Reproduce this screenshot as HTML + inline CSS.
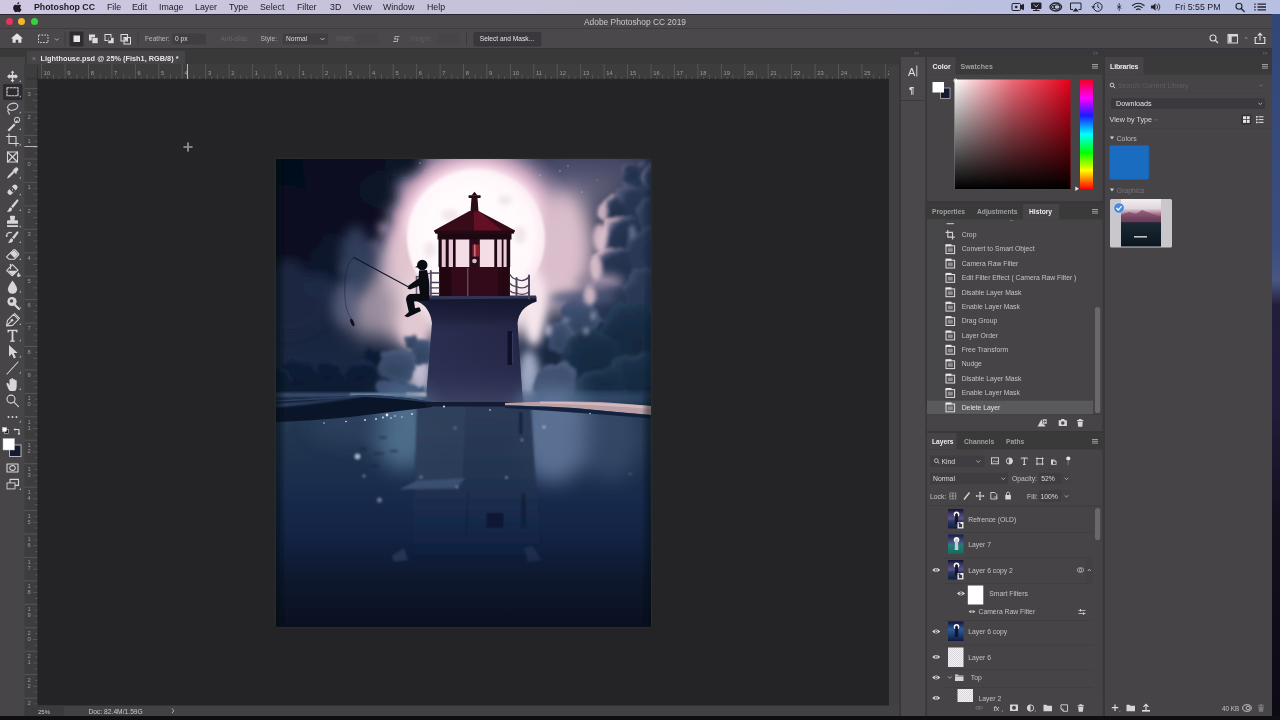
<!DOCTYPE html>
<html lang="en">
<head>
<meta charset="utf-8">
<title>Adobe Photoshop CC 2019</title>
<style>
*{box-sizing:border-box;margin:0;padding:0}
html,body{width:1280px;height:720px;overflow:hidden;background:#0f0f13}
body{font-family:"Liberation Sans",sans-serif;font-size:6.8px;color:#cfcdd1;position:relative}
.abs{position:absolute}
#win,#menubar{will-change:transform}
.t{position:absolute;white-space:pre;line-height:1}
svg{position:absolute;overflow:visible}
#menubar{left:0;top:0;width:1280px;height:14px;background:linear-gradient(90deg,#d0c8e2 0%,#c6c2da 30%,#c5c2d8 50%,#bcc0e0 76%,#b8c0e2 100%)}
#menubar .t{top:2.6px;font-size:8.8px;color:#1c1a24}
#desk{left:1272px;top:14px;width:8px;height:702px;background:linear-gradient(180deg,#33467a 0%,#3a4c80 33%,#4a5680 38%,#221d3c 41.5%,#241a3a 56%,#130f1e 72%,#0c0a14 100%)}
#win{left:0;top:14px;width:1272px;height:702px;background:#39383a}
#titlebar{left:0;top:0;width:1272px;height:15px;background:#4a484b;border-top:1px solid #2b2431}
#optbar{left:0;top:14px;width:1272px;height:21px;background:#4a484b;border-top:1.5px solid #3d3b3e;border-bottom:1px solid #343335}
</style>
</head>
<body>
<div id="menubar" class="abs">
  <svg style="left:12.5px;top:1.5px" width="9" height="11" viewBox="0 0 18 22"><path fill="#1c1a24" d="M12.6 0c.1 1.3-.4 2.5-1.1 3.4-.8.9-2 1.6-3.2 1.5-.1-1.2.500-2.5 1.2-3.3C10.3.7 11.6.1 12.6 0zm3.9 7.5c-1.3.800-2.1 2-2.1 3.6 0 1.8 1.1 3.2 2.6 3.8-.3 1-.8 1.9-1.4 2.8-.9 1.3-1.8 2.6-3.2 2.6-1.4 0-1.8-.8-3.4-.8-1.6 0-2.1.8-3.4.8-1.4.1-2.4-1.4-3.3-2.7C.5 15-.6 10.7 1.3 7.9c.9-1.4 2.5-2.3 4.1-2.3 1.4 0 2.6.9 3.4.9.8 0 2.3-1.1 4-.9 1.5.1 2.8.7 3.7 1.9z"/></svg>
  <span class="t" style="left:34px;font-weight:700">Photoshop CC</span>
  <span class="t" style="left:107px">File</span>
  <span class="t" style="left:132px">Edit</span>
  <span class="t" style="left:159px">Image</span>
  <span class="t" style="left:195px">Layer</span>
  <span class="t" style="left:229px">Type</span>
  <span class="t" style="left:260px">Select</span>
  <span class="t" style="left:297px">Filter</span>
  <span class="t" style="left:330px">3D</span>
  <span class="t" style="left:353px">View</span>
  <span class="t" style="left:383px">Window</span>
  <span class="t" style="left:427px">Help</span>
  <span class="t" style="left:1175px">Fri 5:55 PM</span>
  <svg style="left:1000px;top:0" width="280" height="14" viewBox="1000 0 280 14">
    <g fill="none" stroke="#23212b" stroke-width="1" stroke-linejoin="round">
      <rect x="1012" y="3.5" width="8.5" height="7" rx="1"/><path d="M1020.5 6l3-1.7v5.4l-3-1.7z" fill="#23212b"/><circle cx="1016.2" cy="7" r="1.3" fill="#23212b" stroke="none"/>
      <path d="M1031.5 3h9.5v5.5h-9.5z" fill="#23212b"/><path d="M1033 10.5h6.5M1036.2 8.5v2" stroke-width="1.2"/><path d="M1034 4.5l2.2 2.5 2.2-2.5" stroke="#d6d4ee" stroke-width=".8"/>
      <ellipse cx="1055.8" cy="7" rx="5.8" ry="4" stroke-width="1.3"/><ellipse cx="1057" cy="7" rx="3" ry="2.2" stroke-width="1.1"/><circle cx="1053" cy="7" r="1.6" stroke-width="1"/>
      <path d="M1073 9.5h-2.5v-6.5h10.5v6.5h-2.5"/><path d="M1075.7 8l3 3.5h-6z" fill="#23212b" stroke="none"/>
      <circle cx="1097.8" cy="7" r="4.3"/><path d="M1097.8 4.3V7l1.8 1.3" stroke-width=".9"/><path d="M1091.8 6l1.3 2.2 1.7-1.9" stroke-width=".9"/>
      <path d="M1119.2 3v8M1117 5.5l4.4 3M1121.4 5.5l-4.4 3" stroke-width=".8"/>
      <path d="M1132.5 5.5q5.8-4.5 11.6 0M1134.5 7.6q3.8-3 7.6 0M1136.5 9.6q1.8-1.5 3.6 0" stroke-width="1.2" stroke-linecap="round"/>
      <path d="M1151 5.5h2l2.5-2.2v7.4l-2.5-2.2h-2z" fill="#23212b" stroke="none"/><path d="M1157 5q1.5 2 0 4M1158.8 3.8q2.4 3.2 0 6.4" stroke-width=".9" stroke-linecap="round"/>
      <circle cx="1239" cy="6.3" r="3" stroke-width="1.1"/><path d="M1241.2 8.5l3 3" stroke-width="1.3" stroke-linecap="round"/>
      <path d="M1257.5 4.2h8.5M1257.5 7h8.5M1257.5 9.8h8.5" stroke-width="1.3"/><path d="M1254.2 4.2h1.5M1254.2 7h1.5M1254.2 9.8h1.5" stroke-width="1.3"/>
    </g>
  </svg>

</div>
<div id="desk" class="abs"></div>
<div id="win" class="abs">
  <div id="titlebar" class="abs">
    <span class="abs" style="left:5.5px;top:3px;width:7px;height:7px;border-radius:50%;background:#e6345a"></span>
    <span class="abs" style="left:18px;top:3px;width:7px;height:7px;border-radius:50%;background:#f2b52c"></span>
    <span class="abs" style="left:30.5px;top:3px;width:7px;height:7px;border-radius:50%;background:#36d23e"></span>
    <span class="t" style="left:584px;top:2.5px;font-size:8.4px;color:#c9c7cb">Adobe Photoshop CC 2019</span>
  </div>
  <div id="optbar" class="abs"></div>
  <svg style="left:0;top:15px" width="1272" height="20" viewBox="0 29 1272 20" font-family="Liberation Sans, sans-serif" font-size="6.6">
    <!-- home -->
    <path d="M17 33.2l6 5.3h-1.6v4.3h-3.1v-3h-2.6v3h-3.1v-4.3H11z" fill="#e4e2e6"/>
    <!-- tool preset -->
    <rect x="38.5" y="35" width="9.5" height="7.5" fill="none" stroke="#d2d0d4" stroke-width="1" stroke-dasharray="1.7 1.2"/>
    <path d="M55 38.5l1.8 1.8 1.8-1.8" stroke="#b5b3b7" stroke-width=".9" fill="none"/>
    <path d="M65 32V46M138 32V46M466.5 32V46" stroke="#3c3a3e" stroke-width="1"/>
    <!-- selection modes -->
    <rect x="69.5" y="31.5" width="14" height="15" rx="1" fill="#2e2c30"/>
    <rect x="73.5" y="35.5" width="6.5" height="6.5" fill="#e8e6ea"/>
    <rect x="89" y="34.5" width="6" height="6" fill="#dddbdf"/><rect x="92" y="37.5" width="6" height="6" fill="#dddbdf" stroke="#464447" stroke-width=".6"/>
    <rect x="105" y="34.5" width="6" height="6" fill="none" stroke="#dddbdf" stroke-width="1"/><rect x="108" y="37.5" width="6" height="6" fill="#dddbdf" stroke="#464447" stroke-width=".6"/><rect x="108.5" y="38" width="2.5" height="2.5" fill="#464447"/>
    <rect x="121" y="34.5" width="6.5" height="6.5" fill="none" stroke="#dddbdf" stroke-width="1"/><rect x="124" y="37.5" width="6.5" height="6.5" fill="none" stroke="#dddbdf" stroke-width="1"/><rect x="124.5" y="38" width="2.6" height="2.6" fill="#dddbdf"/>
    <!-- feather -->
    <text x="145" y="41.2" fill="#b9b7bb">Feather:</text>
    <rect x="172" y="33.5" width="34" height="11" rx="1" fill="#403e42"/>
    <text x="175" y="41.2" fill="#dcdade">0 px</text>
    <text x="220.5" y="41.2" fill="#67656a">Anti-alias</text>
    <text x="260.5" y="41.2" fill="#b9b7bb">Style:</text>
    <rect x="282.5" y="33.5" width="45.5" height="11" rx="1" fill="#403e42"/>
    <text x="286" y="41.2" fill="#dcdade">Normal</text>
    <path d="M320.5 38l2 2 2-2" stroke="#c5c3c7" stroke-width=".9" fill="none"/>
    <text x="336" y="41.2" fill="#5e5c61">Width:</text>
    <rect x="356" y="33.5" width="23" height="11" rx="1" fill="#474549"/>
    <path d="M393 41.5h4.5v-2M399.5 36.5H395v2" stroke="#b5b3b7" stroke-width=".9" fill="none"/><path d="M397.5 37.8l1.3 2 -2.6 0zM395 40.2l-1.3-2h2.6z" fill="#b5b3b7"/>
    <text x="411" y="41.2" fill="#5e5c61">Height:</text>
    <rect x="437" y="33.5" width="23" height="11" rx="1" fill="#474549"/>
    <rect x="474" y="32.5" width="67" height="13.5" rx="1.5" fill="#3a383c" stroke="#333135" stroke-width=".6"/>
    <text x="479.8" y="41.3" fill="#e6e4e8">Select and Mask...</text>
    <!-- right icons -->
    <circle cx="1213" cy="38" r="3" fill="none" stroke="#d8d6da" stroke-width="1.1"/><path d="M1215.2 40.2l2.8 2.8" stroke="#d8d6da" stroke-width="1.3"/>
    <rect x="1228" y="34.5" width="9.5" height="8.5" fill="none" stroke="#d8d6da" stroke-width="1"/><rect x="1228.5" y="35" width="3.2" height="7.5" fill="#d8d6da"/><rect x="1228.5" y="35" width="8.5" height="1.5" fill="#d8d6da"/>
    <path d="M1245 38h2.4" stroke="#a5a3a7" stroke-width=".9"/>
    <path d="M1257 37.5h-1.8v6h9.6v-6H1263" fill="none" stroke="#e2e0e4" stroke-width="1.1"/><path d="M1260 40.5V33.5M1257.8 35.6l2.2-2.2 2.2 2.2" fill="none" stroke="#e2e0e4" stroke-width="1.1"/>
  </svg>

  <div class="abs" style="left:0;top:36px;width:24.5px;height:666px;background:#39383a"></div>
  <div class="abs" style="left:0;top:43px;width:24.5px;height:659px;background:#474548"></div>
  <svg style="left:4px;top:38px" width="8" height="5" viewBox="0 0 8 5"><path d="M.5.5l2 2-2 2M4 .5l2 2-2 2" stroke="#77757a" stroke-width=".7" fill="none"/></svg>
  <svg style="left:0;top:0" width="27" height="702" viewBox="0 0 27 702"><rect x="3" y="70" width="19.5" height="16" rx="1.5" fill="#2d2b2f"/><g transform="translate(12.5 62.400000000000006)"><path d="M0-6l2 2.4h-1.3v2.3h2.3v-1.3L5.4 0 3 2.6V1.3H.7v2.3H2L0 6l-2-2.4h1.3V1.3h-2.3v1.3L-5.4 0-3-2.6v1.3h2.3v-2.3H-2z" fill="#d7d5d9"/><path d="M6.5 5.5h2v-2z" fill="#a9a7ab"/></g><g transform="translate(12.5 77.7)"><rect x="-5.5" y="-4" width="11" height="8" stroke="#d7d5d9" fill="none" stroke-width="1.1" stroke-linecap="round" stroke-linejoin="round" stroke-dasharray="2 1.3" stroke-linecap="butt"/><path d="M6.5 5.5h2v-2z" fill="#a9a7ab"/></g><g transform="translate(12.5 93.8)"><ellipse cx=".5" cy="-1" rx="5.2" ry="3.4" transform="rotate(-15)" stroke="#d7d5d9" fill="none" stroke-width="1.1" stroke-linecap="round" stroke-linejoin="round"/><path d="M-3.5 1.5q-2 1.5-.5 3t.5 2" stroke="#d7d5d9" fill="none" stroke-width="1.1" stroke-linecap="round" stroke-linejoin="round" stroke-width=".9"/><path d="M6.5 5.5h2v-2z" fill="#a9a7ab"/></g><g transform="translate(12.5 110.4)"><path d="M-5 5.5L1.5-1l1.5 1.5L-3.5 7z" fill="#d7d5d9"/><path d="M2-1.5l2.5-3 1 1-3 2.5z" fill="#d7d5d9"/><circle cx="4.5" cy="-4.5" r="2.6" stroke="#d7d5d9" fill="none" stroke-width="1.1" stroke-linecap="round" stroke-linejoin="round" stroke-width=".7" stroke-dasharray="1 1"/><path d="M6.5 5.5h2v-2z" fill="#a9a7ab"/></g><g transform="translate(12.5 126)"><path d="M-3.5-6v9.5H6M-6-3.5h9.5V6" stroke="#d7d5d9" fill="none" stroke-width="1.1" stroke-linecap="round" stroke-linejoin="round" stroke-width="1.3" stroke-linecap="butt"/><path d="M6.5 5.5h2v-2z" fill="#a9a7ab"/></g><g transform="translate(12.5 143)"><rect x="-5" y="-5" width="10" height="10" stroke="#d7d5d9" fill="none" stroke-width="1.1" stroke-linecap="round" stroke-linejoin="round"/><path d="M-5-5L5 5M5-5L-5 5" stroke="#d7d5d9" fill="none" stroke-width="1.1" stroke-linecap="round" stroke-linejoin="round" stroke-width=".8"/></g><g transform="translate(12.5 159)"><path d="M-5.5 5.5l1-2.5 5-5 1.5 1.5-5 5z" fill="#d7d5d9"/><path d="M1-3.5l1.5-1.5q1.5-1.3 2.8 0t0 2.8L3.8-.700l.7.7-1 1-3.5-3.5 1-1z" fill="#d7d5d9"/><path d="M6.5 5.5h2v-2z" fill="#a9a7ab"/></g><g transform="translate(12.5 175.7)"><rect x="-6" y="-2.6" width="12" height="5.2" rx="2.4" transform="rotate(-45)" fill="#d7d5d9"/><rect x="-1.8" y="-2.6" width="3.6" height="5.2" transform="rotate(-45)" fill="#474548"/><circle cx="0" cy="0" r=".6" fill="#d7d5d9"/><path d="M6.5 5.5h2v-2z" fill="#a9a7ab"/></g><g transform="translate(12.5 191.5)"><path d="M5.5-6q1 .5.2 1.8L.5 2.5l-2-1.6L4-5.5q.8-1 1.5-.5z" fill="#d7d5d9"/><path d="M-2 1.8l1.8 1.5q-.3 2.5-2.8 3-1.5.2-2.8-.6 1.8-.5 2-2 .3-1.6 1.8-1.9z" fill="#d7d5d9"/><path d="M6.5 5.5h2v-2z" fill="#a9a7ab"/></g><g transform="translate(12.5 207.7)"><path d="M-1.6-6h3.2q1.2 0 1 1.3L2-1.5h2.5q1 0 1 1V2h-11V-.5q0-1 1-1H-2l-.6-3.2q-.2-1.3 1-1.3z" fill="#d7d5d9"/><rect x="-5.5" y="3.5" width="11" height="1.8" fill="#d7d5d9"/><path d="M6.5 5.5h2v-2z" fill="#a9a7ab"/></g><g transform="translate(12.5 223.5)"><path d="M5.5-6q1 .5.2 1.8L1.5 1.5l-2-1.6L4-5.5q.8-1 1.5-.5z" fill="#d7d5d9"/><path d="M-1 .8l1.8 1.5q-.3 2.5-2.8 3-1.5.2-2.8-.6 1.8-.5 2-2 .3-1.6 1.8-1.9z" fill="#d7d5d9"/><path d="M-6-1.5a3.6 3.6 0 0 1 5-3.3" stroke="#d7d5d9" fill="none" stroke-width="1.1" stroke-linecap="round" stroke-linejoin="round" stroke-width=".9"/><path d="M-7-2.3l1.2 2 1.6-1.6z" fill="#d7d5d9"/><path d="M6.5 5.5h2v-2z" fill="#a9a7ab"/></g><g transform="translate(12.5 240.4)"><path d="M-6 2.5L1-4.5q.8-.8 1.6 0L6-1q.7.8 0 1.6L2 4.8H-3.5z" stroke="#d7d5d9" fill="none" stroke-width="1.1" stroke-linecap="round" stroke-linejoin="round"/><path d="M-2.5-1L2 3.5 5.6-.2 1.8-4.2z" fill="#d7d5d9"/><path d="M6.5 5.5h2v-2z" fill="#a9a7ab"/></g><g transform="translate(12.5 256.7)"><path d="M-5.5-.5L0-6l5.5 5.5-5 5q-.8.8-1.6 0L-5.5.2q-.4-.4 0-.7z" stroke="#d7d5d9" fill="none" stroke-width="1.1" stroke-linecap="round" stroke-linejoin="round"/><path d="M-4.8 0H5L0 4.5z" fill="#d7d5d9"/><path d="M6 1.5q1.5 2.2 1.5 3.2a1.5 1.5 0 0 1-3 0q0-1 1.5-3.2z" fill="#d7d5d9"/><path d="M-2-6.5V-2" stroke="#d7d5d9" fill="none" stroke-width="1.1" stroke-linecap="round" stroke-linejoin="round" stroke-width=".9"/><path d="M6.5 5.5h2v-2z" fill="#a9a7ab"/></g><g transform="translate(12.5 273)"><path d="M0-6.5Q4.6-.5 4.6 2.2a4.6 4.6 0 0 1-9.2 0Q-4.6-.5 0-6.5z" fill="#d7d5d9"/><path d="M6.5 5.5h2v-2z" fill="#a9a7ab"/></g><g transform="translate(12.5 289)"><circle cx="-.5" cy="-1.5" r="4.6" fill="#d7d5d9"/><path d="M2 1.5L6.5 6" stroke="#d7d5d9" stroke-width="2.2" stroke-linecap="round"/><circle cx="-1" cy="-2" r="1.7" fill="#474548"/><path d="M6.5 5.5h2v-2z" fill="#a9a7ab"/></g><g transform="translate(12.5 305.4)"><path d="M-6 6.5l1-5.5L1-5l5 5-6 6z" stroke="#d7d5d9" fill="none" stroke-width="1.1" stroke-linecap="round" stroke-linejoin="round"/><path d="M2-6l5 5" stroke="#d7d5d9" fill="none" stroke-width="1.1" stroke-linecap="round" stroke-linejoin="round" stroke-width="1.6"/><circle cx="-.5" cy=".8" r="1.3" fill="#d7d5d9"/><path d="M-5.5 6l4-4" stroke="#d7d5d9" fill="none" stroke-width="1.1" stroke-linecap="round" stroke-linejoin="round" stroke-width=".8"/><path d="M6.5 5.5h2v-2z" fill="#a9a7ab"/></g><g transform="translate(12.5 321.7)"><path d="M-5-6H5v2.8H4q-.2-1.5-1.5-1.5H.9V4q0 1 1.5 1.1V6h-4.8v-.9Q-.9 5-.9 4v-8.7h-1.6q-1.3 0-1.5 1.5h-1z" fill="#d7d5d9"/><path d="M6.5 5.5h2v-2z" fill="#a9a7ab"/></g><g transform="translate(12.5 338)"><path d="M-3.5-7v11.5l2.8-2.7L1.4 6.5l2-.9L1.3.9h3.9z" fill="#d7d5d9"/><path d="M6.5 5.5h2v-2z" fill="#a9a7ab"/></g><g transform="translate(12.5 354)"><path d="M-5.5 6L5.5-6" stroke="#d7d5d9" fill="none" stroke-width="1.1" stroke-linecap="round" stroke-linejoin="round" stroke-width="1.2"/><path d="M6.5 5.5h2v-2z" fill="#a9a7ab"/></g><g transform="translate(12.5 370.4)"><path d="M-2.5 6.5q-1-.5-2-3L-6-.2q-.4-1 .5-1.3t1.4.6L-3 1V-4.5q0-1 .9-1t.9 1V-5.5q0-1 .9-1t.9 1v1q0-1 .9-1t.9 1V-3.5q0-.9.9-.9t.9.9V2q0 3-1.5 4.5z" fill="#d7d5d9"/><path d="M6.5 5.5h2v-2z" fill="#a9a7ab"/></g><g transform="translate(12.5 386.6)"><circle cx="-1.5" cy="-1.5" r="4" stroke="#d7d5d9" fill="none" stroke-width="1.1" stroke-linecap="round" stroke-linejoin="round" stroke-width="1.3"/><path d="M1.5 1.5L6 6" stroke="#d7d5d9" fill="none" stroke-width="1.1" stroke-linecap="round" stroke-linejoin="round" stroke-width="1.8"/></g><g transform="translate(12.5 403)"><circle cx="-4" cy="0" r="1" fill="#d7d5d9"/><circle cx="0" cy="0" r="1" fill="#d7d5d9"/><circle cx="4" cy="0" r="1" fill="#d7d5d9"/><path d="M6.5 5.5h2v-2z" fill="#a9a7ab"/></g><g transform="translate(6.5 417)"><rect x="-2" y="-1.5" width="4" height="4" fill="#1a1a22" stroke="#d7d5d9" stroke-width=".6"/><rect x="-4" y="-3.5" width="4" height="4" fill="#fff" stroke="#d7d5d9" stroke-width=".4"/></g><g transform="translate(17 417)"><path d="M-2.5-1.5H2V3" stroke="#d7d5d9" fill="none" stroke-width="1.1" stroke-linecap="round" stroke-linejoin="round" stroke-width=".8"/><path d="M-3.5-1.5l1.8-1.5v3zM2 4l-1.5-1.8h3z" fill="#d7d5d9"/></g><rect x="9.5" y="431" width="11.5" height="11.5" fill="#141a30" stroke="#d9d7db" stroke-width=".8"/><rect x="3" y="424.5" width="11.5" height="11.5" fill="#ffffff" stroke="#bdbbbf" stroke-width=".5"/><g transform="translate(12.5 454)"><rect x="-5.5" y="-4" width="11" height="8" stroke="#d7d5d9" fill="none" stroke-width="1.1" stroke-linecap="round" stroke-linejoin="round" stroke-width=".9"/><ellipse cx="0" cy="0" rx="2.8" ry="2.4" stroke="#d7d5d9" fill="none" stroke-width="1.1" stroke-linecap="round" stroke-linejoin="round" stroke-width=".8" stroke-dasharray="1 .8"/></g><g transform="translate(12.5 470.4)"><rect x="-2.5" y="-5" width="8.5" height="6" stroke="#d7d5d9" fill="none" stroke-width="1.1" stroke-linecap="round" stroke-linejoin="round" stroke-width=".9"/><rect x="-5.5" y="-1.5" width="8" height="6" fill="#474548" stroke="#d7d5d9" stroke-width=".9"/><path d="M6.5 5.5h2v-2z" fill="#a9a7ab"/></g></svg>
  <div id="doc" class="abs" style="left:37px;top:65px;width:852px;height:627px;background:#242426"></div>
  <div class="abs" style="left:276px;top:145px;width:375px;height:468px;box-shadow:0 0 3px 0 rgba(90,90,105,.3)"></div>
  <svg id="art" style="left:276px;top:145px" width="375" height="468" viewBox="276 159 375 468">
<defs>
  <clipPath id="ac"><rect x="276" y="159" width="375" height="468"/></clipPath>
  <linearGradient id="sky" x1="0" y1="0" x2="0" y2="1">
    <stop offset="0" stop-color="#0a1428"/><stop offset=".6" stop-color="#18243c"/><stop offset="1" stop-color="#1c2a44"/>
  </linearGradient>
  <radialGradient id="glow" gradientUnits="userSpaceOnUse" cx="476" cy="238" r="138">
    <stop offset="0" stop-color="#fff6f8"/><stop offset=".5" stop-color="#f8e0ec"/><stop offset=".545" stop-color="#e4c0d4"/><stop offset=".6" stop-color="#c4a4bc" stop-opacity=".95"/><stop offset=".67" stop-color="#8c80a0" stop-opacity=".8"/><stop offset=".77" stop-color="#5a5c7c" stop-opacity=".45"/><stop offset="1" stop-color="#46507a" stop-opacity="0"/>
  </radialGradient>
  <radialGradient id="moon" gradientUnits="userSpaceOnUse" cx="472" cy="236" r="72">
    <stop offset="0" stop-color="#ffffff"/><stop offset=".85" stop-color="#fff8fb"/><stop offset="1" stop-color="#fbeaf1"/>
  </radialGradient>
  <linearGradient id="water" x1="0" y1="0" x2="0" y2="1">
    <stop offset="0" stop-color="#263c58"/><stop offset=".18" stop-color="#21354f"/><stop offset=".42" stop-color="#182b4c"/><stop offset=".6" stop-color="#132344"/><stop offset=".78" stop-color="#0e182e"/><stop offset="1" stop-color="#0a1020"/>
  </linearGradient>
  <linearGradient id="tower" x1="0" y1="0" x2="1" y2="0">
    <stop offset="0" stop-color="#3c4062"/><stop offset=".08" stop-color="#3a3e5e"/><stop offset=".11" stop-color="#2b2e50"/><stop offset=".5" stop-color="#272a4a"/><stop offset="1" stop-color="#232645"/>
  </linearGradient>
  <linearGradient id="towery" x1="0" y1="0" x2="0" y2="1">
    <stop offset="0" stop-color="#10122a" stop-opacity=".85"/><stop offset=".2" stop-color="#161830" stop-opacity=".55"/><stop offset=".34" stop-color="#272a4a" stop-opacity="0"/><stop offset=".7" stop-color="#30345a" stop-opacity=".35"/><stop offset="1" stop-color="#464a6a" stop-opacity=".75"/>
  </linearGradient>
  <linearGradient id="subt" x1="0" y1="0" x2="0" y2="1">
    <stop offset="0" stop-color="#2b3b57"/><stop offset=".45" stop-color="#23344f" stop-opacity=".9"/><stop offset=".75" stop-color="#182a4c" stop-opacity=".6"/><stop offset="1" stop-color="#132344" stop-opacity="0"/>
  </linearGradient>
  <radialGradient id="pf" cx=".72" cy=".58" r=".78"><stop offset="0" stop-color="#22304a"/><stop offset=".55" stop-color="#283652"/><stop offset=".7" stop-color="#565c7c"/><stop offset=".82" stop-color="#b8a2b4"/><stop offset="1" stop-color="#f0d6e0"/></radialGradient>
  <radialGradient id="pf2" cx=".7" cy=".6" r=".78"><stop offset="0" stop-color="#22304a"/><stop offset=".6" stop-color="#2a3856"/><stop offset=".82" stop-color="#4e5676"/><stop offset="1" stop-color="#9088aa"/></radialGradient>
  <radialGradient id="pi" cx=".65" cy=".6" r=".75"><stop offset="0" stop-color="#243250"/><stop offset=".7" stop-color="#2c3a56"/><stop offset="1" stop-color="#4a5878"/></radialGradient>
  <radialGradient id="pd" cx=".6" cy=".65" r=".75"><stop offset="0" stop-color="#14273d"/><stop offset=".7" stop-color="#1a2f47"/><stop offset="1" stop-color="#2e4864"/></radialGradient>
  <radialGradient id="pb" cx=".45" cy=".7" r=".75"><stop offset="0" stop-color="#0b1830"/><stop offset=".7" stop-color="#0f1c36"/><stop offset=".92" stop-color="#1c2a46"/><stop offset="1" stop-color="#34456a"/></radialGradient>
  <radialGradient id="pm" cx=".45" cy=".7" r=".75"><stop offset="0" stop-color="#30425f"/><stop offset=".7" stop-color="#3e5070"/><stop offset="1" stop-color="#5a6888"/></radialGradient>
  <filter id="cl" x="-20%" y="-20%" width="140%" height="140%"><feTurbulence type="fractalNoise" baseFrequency=".045" numOctaves="3" seed="7" result="n"/><feDisplacementMap in="SourceGraphic" in2="n" scale="14" xChannelSelector="R" yChannelSelector="G"/><feGaussianBlur stdDeviation="1.4"/></filter>
  <filter id="cls" x="-20%" y="-20%" width="140%" height="140%"><feTurbulence type="fractalNoise" baseFrequency=".03" numOctaves="3" seed="3" result="n"/><feDisplacementMap in="SourceGraphic" in2="n" scale="22" xChannelSelector="R" yChannelSelector="G"/><feGaussianBlur stdDeviation="6"/></filter>
  <filter id="b1" x="-20%" y="-20%" width="140%" height="140%"><feGaussianBlur stdDeviation=".8"/></filter>
  <filter id="b2" x="-20%" y="-20%" width="140%" height="140%"><feGaussianBlur stdDeviation="2"/></filter>
  <filter id="b4" x="-30%" y="-30%" width="160%" height="160%"><feGaussianBlur stdDeviation="4"/></filter>
  <filter id="b6" x="-40%" y="-40%" width="180%" height="180%"><feGaussianBlur stdDeviation="6"/></filter>
  <filter id="b10" x="-50%" y="-50%" width="200%" height="200%"><feGaussianBlur stdDeviation="10"/></filter>
  <filter id="b14" x="-50%" y="-50%" width="200%" height="200%"><feGaussianBlur stdDeviation="14"/></filter>
</defs>
<g clip-path="url(#ac)">
  <rect x="276" y="159" width="375" height="250" fill="url(#sky)"/>
  <g filter="url(#b14)">
    <ellipse cx="600" cy="168" rx="60" ry="28" fill="#484c68"/>
    <ellipse cx="582" cy="198" rx="42" ry="12" fill="#7a748c"/>
  </g>
  <rect x="276" y="159" width="375" height="250" fill="url(#glow)"/>
  <!-- broad pink glow beside / below moon -->
  <g filter="url(#b10)">
    <ellipse cx="564" cy="250" rx="30" ry="60" fill="#dabecb"/>
    <ellipse cx="407" cy="288" rx="27" ry="58" fill="#e0c4ce"/>
    <ellipse cx="372" cy="308" rx="26" ry="30" fill="#988c9e"/>
    <ellipse cx="476" cy="300" rx="70" ry="40" fill="#f4e3e8"/>
  </g>
  <g filter="url(#b4)">
    <ellipse cx="534" cy="308" rx="11" ry="38" fill="#f6e6ec"/>
    <ellipse cx="419" cy="370" rx="12" ry="28" fill="#c4bcd0"/>
    <ellipse cx="529" cy="378" rx="11" ry="28" fill="#a0a8c2"/>
    <ellipse cx="414" cy="330" rx="14" ry="20" fill="#e2c8d2"/>
  </g>
  <g filter="url(#cls)">
    <!-- dark upper-left mass (soft, near-black navy) -->
    <circle cx="285" cy="175" r="55" fill="#060d1e"/>
    <circle cx="350" cy="168" r="48" fill="#070f21"/>
    <circle cx="402" cy="160" r="20" fill="#0b1428"/>
    <circle cx="295" cy="240" r="55" fill="#070f20"/>
    <circle cx="348" cy="215" r="38" fill="#081022"/>
    <circle cx="378" cy="192" r="18" fill="#0b1428"/>
    <circle cx="335" cy="258" r="24" fill="#0d172c"/>
    <circle cx="292" cy="300" r="36" fill="#1a2540"/>
    <circle cx="318" cy="290" r="14" fill="#1e2944"/>
  </g>
  <g filter="url(#b6)"><ellipse cx="356" cy="262" rx="16" ry="36" fill="#3a4866" opacity=".8"/><ellipse cx="345" cy="305" rx="14" ry="22" fill="#5a6080" opacity=".7"/></g>
  <g filter="url(#b4)" opacity=".7">
    <ellipse cx="384" cy="228" rx="7" ry="6" fill="#b9a7c0"/>
    <ellipse cx="376" cy="246" rx="8" ry="5" fill="#6c6c8c"/>
    <ellipse cx="352" cy="268" rx="12" ry="6" fill="#39445f"/>
  </g>
  <g filter="url(#cl)">
    <!-- right cumulus tower, back to front -->
    <circle cx="642" cy="180" r="17" fill="url(#pf2)"/>
    <circle cx="654" cy="178" r="13" fill="url(#pf2)"/>
    <circle cx="630" cy="172" r="9" fill="url(#pf2)"/>
    <circle cx="634" cy="204" r="19" fill="url(#pf2)"/>
    <circle cx="656" cy="215" r="20" fill="url(#pi)"/>
    <circle cx="614" cy="212" r="14" fill="url(#pf)"/>
    <circle cx="620" cy="238" r="22" fill="url(#pf)"/>
    <circle cx="649" cy="250" r="24" fill="url(#pi)"/>
    <circle cx="613" cy="270" r="23" fill="url(#pf)"/>
    <circle cx="648" cy="296" r="28" fill="url(#pi)"/>
    <circle cx="604" cy="300" r="22" fill="url(#pf)"/>
    <circle cx="580" cy="318" r="18" fill="url(#pm)"/>
    <circle cx="630" cy="335" r="32" fill="url(#pd)"/>
    <circle cx="560" cy="338" r="16" fill="url(#pm)"/>
    <circle cx="592" cy="360" r="30" fill="url(#pd)"/>
    <circle cx="556" cy="382" r="20" fill="url(#pm)"/>
    <circle cx="640" cy="385" r="34" fill="url(#pd)"/>
    <circle cx="600" cy="395" r="28" fill="url(#pd)"/>
  </g>
  <g filter="url(#b4)"><ellipse cx="600" cy="281" rx="24" ry="8" fill="#9486a0" opacity=".85"/><ellipse cx="584" cy="298" rx="34" ry="7" fill="#4c5878" opacity=".9"/></g>
  <g filter="url(#b2)" opacity=".9">
    <ellipse cx="600" cy="238" rx="7" ry="14" fill="#dcc0cc"/><ellipse cx="596" cy="268" rx="6" ry="12" fill="#d8bcc8"/><ellipse cx="603" cy="212" rx="5" ry="8" fill="#d0b4c4"/><ellipse cx="590" cy="296" rx="6" ry="9" fill="#d4bac6"/>
    <ellipse cx="566" cy="320" rx="4" ry="2" fill="#8a94ac"/>
    <ellipse cx="586" cy="331" rx="2.5" ry="4" fill="#8d97ae"/>
    <ellipse cx="593" cy="316" rx="2" ry="4" fill="#a3a7ba"/>
    <ellipse cx="548" cy="330" rx="4" ry="6" fill="#a9a8ba"/>
    <ellipse cx="632" cy="232" rx="3" ry="7" fill="#6a7898"/>
  </g>
  <g filter="url(#cl)">
    <!-- lower-left cloud band -->
    <circle cx="422" cy="352" r="14" fill="url(#pm)"/>
    <circle cx="410" cy="340" r="8" fill="url(#pm)"/>
    <circle cx="398" cy="366" r="18" fill="url(#pm)"/>
    <circle cx="372" cy="358" r="11" fill="url(#pb)"/>
    <circle cx="362" cy="376" r="17" fill="url(#pb)"/>
    <circle cx="330" cy="378" r="17" fill="url(#pb)"/>
    <circle cx="298" cy="376" r="20" fill="url(#pb)"/>
    <circle cx="276" cy="380" r="14" fill="url(#pb)"/>
    <rect x="270" y="382" width="110" height="16" fill="#0d1a33"/>
    <rect x="378" y="384" width="45" height="14" fill="#3a4e72"/>
  </g>
  <g fill="#e6e0ee">
    <circle cx="560" cy="171" r=".6"/><circle cx="568" cy="166" r=".5"/><circle cx="540" cy="175" r=".5"/><circle cx="582" cy="192" r=".5"/><circle cx="530" cy="168" r=".4"/><circle cx="597" cy="180" r=".4"/><circle cx="420" cy="163" r=".6"/><circle cx="425" cy="170" r=".4"/>
  </g>

  <circle cx="476" cy="238.5" r="69" fill="url(#moon)" filter="url(#b1)"/>
  <g fill="#e8d8e2" opacity=".55" filter="url(#b2)"><ellipse cx="450" cy="215" rx="9" ry="6"/><ellipse cx="505" cy="200" rx="7" ry="5"/><ellipse cx="520" cy="235" rx="6" ry="9"/><ellipse cx="430" cy="250" rx="6" ry="8"/></g>
  <g id="lighthouse">
    <!-- tower -->
    <path d="M414 300 Q430 305 432 323 L425.5 405 L523 405 L517.5 323 Q519 307 536.5 301.5 L536 296 L417 296 Z" fill="url(#tower)"/>
    <path d="M414 300 Q430 305 432 323 L425.5 405 L523 405 L517.5 323 Q519 307 536.5 301.5 L536 296 L417 296 Z" fill="url(#towery)"/>
    <rect x="507.5" y="331" width="4.5" height="34" fill="#0e1128"/>
    <rect x="512" y="333" width="1.2" height="30" fill="#41456a" opacity=".6"/>
    <!-- deck top surface -->
    <path d="M414 300 L417 295.5 L536 295.5 L536.5 298.5 L416 299.5 Z" fill="#303454"/>
    <!-- lantern lower band -->
    <rect x="439.3" y="266.5" width="70.5" height="29.5" fill="#330a1a"/>
    <rect x="439.3" y="266.5" width="12" height="29.5" fill="#22060f"/>
    <rect x="498" y="266.5" width="11.8" height="29.5" fill="#260813"/>
    <rect x="467.3" y="268" width="1" height="28" fill="#7a6f86" opacity=".9"/>
    <!-- glass -->
    <rect x="440" y="238.5" width="69.5" height="28.5" fill="#f5dde5"/>
    <rect x="440" y="238.5" width="15.5" height="28.5" fill="#e7c8d6"/>
    <rect x="495" y="238.5" width="14" height="28.5" fill="#ebd0dc"/>
    <!-- lamp -->
    <rect x="469.3" y="238.5" width="10.5" height="28.5" fill="#2a0c18"/>
    <rect x="472.5" y="244.5" width="6.5" height="12" fill="#8c1e2e"/>
    <rect x="474" y="244.5" width="1.6" height="12" fill="#c56f7d"/>
    <circle cx="474.5" cy="261" r="2.3" fill="#cdc2d2"/>
    <!-- posts -->
    <g fill="#1f0812">
      <rect x="438.5" y="236" width="3.2" height="31"/>
      <rect x="445.7" y="238" width="3" height="29"/>
      <rect x="453" y="238" width="2.6" height="29"/>
      <rect x="494.3" y="238" width="2.8" height="29"/>
      <rect x="501.7" y="238" width="1.8" height="29"/>
      <rect x="506.6" y="236" width="3.6" height="31"/>
    </g>
    <!-- eave band + roof -->
    <rect x="437.5" y="231.5" width="74" height="8" fill="#1d0811"/>
    <path d="M469.5 211 L478.5 211 L515 230.5 L513.5 233.5 L435.5 233.5 L434 230.5 Z" fill="#380b19"/>
    <path d="M474 211 L478.5 211 L504 232 L474 232 Z" fill="#681126" opacity=".9"/>
    <path d="M434 230.5 L515 230.5 L513.5 233.5 L435.5 233.5 Z" fill="#250a14"/>
    <!-- finial -->
    <path d="M470.5 211.5 L471.5 198 L477.5 198 L478.5 211.5 Z" fill="#2c0c18"/>
    <rect x="468.5" y="195.3" width="12.2" height="2.7" rx=".8" fill="#250a14"/>
    <path d="M471.5 195.5 L474.5 191.8 L477.5 195.5 Z" fill="#250a14"/>
    <!-- railing -->
    <g stroke="#45415a" stroke-width="1.3" fill="none" stroke-linecap="round">
      <path d="M416.5 276.5 V296" stroke="#6a647a" stroke-width="1.6"/><path d="M430.8 271 V296" stroke="#5a546c" stroke-width="2"/>
      <path d="M431 273 H439 M431 282.5 H439 M431 287.8 H439 M431 293.3 H439 M416.8 277 L430.5 273"/>
      <path d="M516.5 278 V296.5 M529 275.5 V298.5" stroke="#4a465e" stroke-width="1.9"/>
      <path d="M510 274.5 Q513 279.5 516.5 279 Q523 283 529 277"/>
      <path d="M510 283.5 Q513 287 516.5 286.5 Q523 290 529 285"/>
      <path d="M510 291 Q513 293.5 516.5 293 Q523 296 529 292"/>
    </g>
  </g>
  <g id="boy" fill="#0b0b13">
    <circle cx="422.3" cy="265" r="5.2"/>
    <path d="M415 267.3 L420.5 263.5 L423 268 Z"/>
    <path d="M419 270.5 L427 270 Q430 280 429.3 296 L420.5 297 Q417.8 284 419 270.5 Z"/>
    <path d="M420.5 277 L409 285.3 L407.5 288.5 L410 289.5 L424 284 Z"/>
    <path d="M429 293.5 L410 294 Q405.3 295.5 406.3 301 L408.8 312 L404.3 316 L407.8 317.3 L421 311 L419.5 307.3 L415 308.3 L414 301.5 L429.5 300.5 Z"/>
    <path d="M409 287.2 L353.5 257.3" stroke="#11142a" stroke-width="1.1" fill="none"/>
    <path d="M353.5 257.3 Q344.5 266 344.6 290 Q345 312 351.5 319" stroke="#141b34" stroke-width=".55" fill="none" opacity=".85"/>
    <ellipse cx="352.3" cy="322.5" rx="1.6" ry="4" transform="rotate(-22 352.3 322.5)" fill="#0d1120"/>
  </g>

  <g id="water">
    <!-- horizon strips -->
    <rect x="276" y="392.5" width="150" height="5" fill="#34496b" filter="url(#b1)"/>
    <rect x="350" y="393.5" width="76" height="2.6" fill="#8a9cb8" filter="url(#b1)"/>
    <rect x="406" y="392.5" width="20" height="4" fill="#dccbd2" filter="url(#b1)"/>
    <ellipse cx="590" cy="398" rx="75" ry="5" fill="#34506f" filter="url(#b4)"/>
    <!-- underwater body -->
    <path d="M276 402 Q330 396 380 398 Q410 400 426 403 L523 404 Q580 404 651 412 L651 627 L276 627 Z" fill="url(#water)"/>
    <!-- light shafts around the submerged tower -->
    <g filter="url(#b10)">
      <ellipse cx="404" cy="428" rx="30" ry="42" fill="#527292" opacity=".9"/>
      <ellipse cx="553" cy="432" rx="38" ry="50" fill="#60769a" opacity=".9"/>
      <ellipse cx="610" cy="440" rx="30" ry="40" fill="#3c4e6e" opacity=".7"/>
      <ellipse cx="350" cy="425" rx="40" ry="18" fill="#2c4462" opacity=".7"/>
          </g>
    <!-- submerged tower (dark silhouette in lit water) -->
    <g filter="url(#b1)">
      <path d="M417 406 L531 406 L541 562 L412 562 Z" fill="url(#subt)"/>
      <path d="M417 406 L466 406 L462 486 L415 486 Z" fill="#3a4c68" opacity=".35"/>
      <path d="M399 489.5 L454 488.5 L466 478 L416 481 Z" fill="#43587a" opacity=".75"/>
      <rect x="486.5" y="513" width="17" height="15" fill="#0d1830" opacity=".85"/>
      <rect x="519" y="412" width="3.5" height="22" fill="#14203a" opacity=".85"/>
      <rect x="521" y="493" width="5" height="36" fill="#0f1a34" opacity=".6"/>
      <path d="M468 490 L466 540" stroke="#0f1a34" stroke-width="1.5" opacity=".45"/>
      <path d="M392 556 L404 548 L408 560 L394 562 Z" fill="#3a4e74" opacity=".45"/>
      <path d="M524 548 L532 546 L542 560 L528 562 Z" fill="#33476c" opacity=".35"/>
    </g>
    <!-- wave / surface (left, dark lens) -->
    <path d="M276 400 Q320 398 365 395 Q400 396 432 402 L432 407 Q390 412 350 417 Q310 421 276 422 Z" fill="#0b152a"/>
    <path d="M276 403.5 Q310 402 345 397.5 L365 395.5 Q345 400.5 276 407.5 Z" fill="#3a5072" opacity=".8" filter="url(#b1)"/>
    <path d="M276 400 Q320 398 365 395 Q400 396 432 402 L432 403 Q400 398.5 365 397 Q320 399.5 276 402 Z" fill="#2e4364" opacity=".9"/>
    <!-- waterline under tower -->
    <path d="M426 402 L523 402 L523 406.5 L426 406.5 Z" fill="#141c34"/>
    <!-- right pink wave -->
    <path d="M505 403 Q560 400.5 600 402 Q630 404 651 406 L651 415 Q620 412.5 590 409.5 Q560 406.5 505 405.5 Z" fill="#ba9fa7"/>
    <path d="M540 401.5 Q590 401.5 651 406 L651 409 Q600 404.5 540 403.5Z" fill="#d6bec2" opacity=".8"/>
    <path d="M505 405.5 Q560 406.5 590 409.5 Q620 412.5 651 415 L651 418.5 Q610 414.5 505 408 Z" fill="#13233f"/>
    <!-- sparkles -->
    <g fill="#dfe6f0">
      <circle cx="387" cy="415" r="1.4"/><circle cx="383" cy="417.5" r=".9"/><circle cx="391" cy="418" r=".8"/><circle cx="395" cy="416" r=".8"/>
      <circle cx="365" cy="420" r=".9"/><circle cx="346" cy="421.5" r=".8"/><circle cx="324" cy="423" r=".7"/><circle cx="376" cy="419" r=".9"/>
      <circle cx="412" cy="414" r=".9"/><circle cx="402" cy="417" r=".7"/><circle cx="444" cy="406.5" r="1"/>
      <circle cx="490" cy="410" r=".8"/><circle cx="590" cy="413.5" r=".7"/>
    </g>
    <g fill="#c0cde0" filter="url(#b1)">
      <circle cx="357.5" cy="456.5" r="3" opacity=".8"/>
      <circle cx="379.5" cy="500" r="2.6" opacity=".45"/>
      <circle cx="364" cy="476" r="1.6" opacity=".5"/>
      <circle cx="421" cy="477" r="1.5" opacity=".5"/>
      <circle cx="457" cy="487" r="1.6" opacity=".55"/>
      <circle cx="506.5" cy="477.5" r="1.5" opacity=".5"/>
      <circle cx="544" cy="427" r="1.5" opacity=".8"/>
      <circle cx="455" cy="428" r="1.5" opacity=".4"/>
      <circle cx="522" cy="440" r="1.3" opacity=".6"/>
      <circle cx="630" cy="474" r="1.4" opacity=".25"/>
    </g>
    <g fill="#101c36" opacity=".5" filter="url(#b1)">
      <ellipse cx="383" cy="437.5" rx="4" ry="1.2"/><ellipse cx="363" cy="449" rx="4" ry="1.2"/>
      <ellipse cx="379" cy="453.5" rx="5" ry="1.3"/><ellipse cx="394" cy="451" rx="4.5" ry="1.2"/>
      <ellipse cx="375" cy="466" rx="4" ry="1.2"/>
    </g>
  </g>
  <!-- vignette edges -->
  <rect x="270" y="159" width="12" height="468" fill="#04070e" opacity=".5" filter="url(#b2)"/>
  <rect x="646" y="159" width="10" height="236" fill="#04070e" opacity=".25" filter="url(#b2)"/><rect x="645" y="395" width="12" height="232" fill="#04070e" opacity=".45" filter="url(#b2)"/>

</g>
</svg>
  <div class="abs" style="left:0;top:36px;width:1272px;height:7px;background:#393939"></div>
  <div class="abs" style="left:24.5px;top:35px;width:874.5px;height:15.5px;background:#393939"></div>
  <div class="abs" style="left:27px;top:36.5px;width:157.5px;height:14px;background:#464447"></div>
  <span class="t" style="left:32px;top:41px;font-size:7px;color:#8e8c90">×</span>
  <span class="t" style="left:40.5px;top:41.3px;font-size:7.3px;font-weight:700;color:#e9e7eb;letter-spacing:.02px">Lighthouse.psd @ 25% (Fish1, RGB/8) *</span>
  <svg style="left:24px;top:50px" width="875" height="652" viewBox="24 64 875 652" font-family="Liberation Sans, sans-serif" font-size="5.8" fill="#9a9a9c"><rect x="24.5" y="64" width="874.5" height="15" fill="#3d3d3e"/><rect x="24.5" y="64" width="13" height="642" fill="#3d3d3e"/><rect x="27" y="78.5" width="862" height=".8" fill="#2c2c2e"/><rect x="37" y="66" width=".8" height="640" fill="#2c2c2e"/><text x="43.8" y="74.5">10</text><text x="67.3" y="74.5">9</text><text x="90.7" y="74.5">8</text><text x="114.1" y="74.5">7</text><text x="137.6" y="74.5">6</text><text x="161" y="74.5">5</text><text x="184.4" y="74.5">4</text><text x="207.9" y="74.5">3</text><text x="231.3" y="74.5">2</text><text x="254.8" y="74.5">1</text><text x="278.2" y="74.5">0</text><text x="301.6" y="74.5">1</text><text x="325.1" y="74.5">2</text><text x="348.5" y="74.5">3</text><text x="371.9" y="74.5">4</text><text x="395.4" y="74.5">5</text><text x="418.8" y="74.5">6</text><text x="442.3" y="74.5">7</text><text x="465.7" y="74.5">8</text><text x="489.1" y="74.5">9</text><text x="512.6" y="74.5">10</text><text x="536" y="74.5">11</text><text x="559.5" y="74.5">12</text><text x="582.9" y="74.5">13</text><text x="606.3" y="74.5">14</text><text x="629.8" y="74.5">15</text><text x="653.2" y="74.5">16</text><text x="676.6" y="74.5">17</text><text x="700.1" y="74.5">18</text><text x="723.5" y="74.5">19</text><text x="747" y="74.5">20</text><text x="770.4" y="74.5">21</text><text x="793.8" y="74.5">22</text><text x="817.3" y="74.5">23</text><text x="840.7" y="74.5">24</text><text x="864.1" y="74.5">25</text><text x="887.6" y="74.5">26</text><path d="M41.6 64V79M47.5 76.5V79M53.3 74.5V79M59.2 76.5V79M65.1 64V79M70.9 76.5V79M76.8 74.5V79M82.6 76.5V79M88.5 64V79M94.4 76.5V79M100.2 74.5V79M106.1 76.5V79M111.9 64V79M117.8 76.5V79M123.7 74.5V79M129.5 76.5V79M135.4 64V79M141.2 76.5V79M147.1 74.5V79M153 76.5V79M158.8 64V79M164.7 76.5V79M170.5 74.5V79M176.4 76.5V79M182.2 64V79M188.1 76.5V79M194 74.5V79M199.8 76.5V79M205.7 64V79M211.5 76.5V79M217.4 74.5V79M223.3 76.5V79M229.1 64V79M235 76.5V79M240.8 74.5V79M246.7 76.5V79M252.6 64V79M258.4 76.5V79M264.3 74.5V79M270.1 76.5V79M276 64V79M281.9 76.5V79M287.7 74.5V79M293.6 76.5V79M299.4 64V79M305.3 76.5V79M311.2 74.5V79M317 76.5V79M322.9 64V79M328.7 76.5V79M334.6 74.5V79M340.5 76.5V79M346.3 64V79M352.2 76.5V79M358 74.5V79M363.9 76.5V79M369.8 64V79M375.6 76.5V79M381.5 74.5V79M387.3 76.5V79M393.2 64V79M399 76.5V79M404.9 74.5V79M410.8 76.5V79M416.6 64V79M422.5 76.5V79M428.3 74.5V79M434.2 76.5V79M440.1 64V79M445.9 76.5V79M451.8 74.5V79M457.6 76.5V79M463.5 64V79M469.4 76.5V79M475.2 74.5V79M481.1 76.5V79M486.9 64V79M492.8 76.5V79M498.7 74.5V79M504.5 76.5V79M510.4 64V79M516.2 76.5V79M522.1 74.5V79M528 76.5V79M533.8 64V79M539.7 76.5V79M545.5 74.5V79M551.4 76.5V79M557.2 64V79M563.1 76.5V79M569 74.5V79M574.8 76.5V79M580.7 64V79M586.5 76.5V79M592.4 74.5V79M598.3 76.5V79M604.1 64V79M610 76.5V79M615.8 74.5V79M621.7 76.5V79M627.6 64V79M633.4 76.5V79M639.3 74.5V79M645.1 76.5V79M651 64V79M656.9 76.5V79M662.7 74.5V79M668.6 76.5V79M674.4 64V79M680.3 76.5V79M686.2 74.5V79M692 76.5V79M697.9 64V79M703.7 76.5V79M709.6 74.5V79M715.5 76.5V79M721.3 64V79M727.2 76.5V79M733 74.5V79M738.9 76.5V79M744.8 64V79M750.6 76.5V79M756.5 74.5V79M762.3 76.5V79M768.2 64V79M774 76.5V79M779.9 74.5V79M785.8 76.5V79M791.6 64V79M797.5 76.5V79M803.3 74.5V79M809.2 76.5V79M815.1 64V79M820.9 76.5V79M826.8 74.5V79M832.6 76.5V79M838.5 64V79M844.4 76.5V79M850.2 74.5V79M856.1 76.5V79M861.9 64V79M867.8 76.5V79M873.7 74.5V79M879.5 76.5V79M885.4 64V79" stroke="#626264" stroke-width=".7" fill="none"/><text x="27.5" y="95.7">3</text><text x="27.5" y="119.1">2</text><text x="27.5" y="142.6">1</text><text x="27.5" y="166">0</text><text x="27.5" y="189.4">1</text><text x="27.5" y="212.9">2</text><text x="27.5" y="236.3">3</text><text x="27.5" y="259.8">4</text><text x="27.5" y="283.2">5</text><text x="27.5" y="306.6">6</text><text x="27.5" y="330.1">7</text><text x="27.5" y="353.5">8</text><text x="27.5" y="376.9">9</text><text x="27.5" y="400.4">1</text><text x="27.5" y="406.4">0</text><text x="27.5" y="423.8">1</text><text x="27.5" y="429.8">1</text><text x="27.5" y="447.2">1</text><text x="27.5" y="453.2">2</text><text x="27.5" y="470.7">1</text><text x="27.5" y="476.7">3</text><text x="27.5" y="494.1">1</text><text x="27.5" y="500.1">4</text><text x="27.5" y="517.6">1</text><text x="27.5" y="523.6">5</text><text x="27.5" y="541">1</text><text x="27.5" y="547">6</text><text x="27.5" y="564.4">1</text><text x="27.5" y="570.4">7</text><text x="27.5" y="587.9">1</text><text x="27.5" y="593.9">8</text><text x="27.5" y="611.3">1</text><text x="27.5" y="617.3">9</text><text x="27.5" y="634.8">2</text><text x="27.5" y="640.8">0</text><text x="27.5" y="658.2">2</text><text x="27.5" y="664.2">1</text><text x="27.5" y="681.6">2</text><text x="27.5" y="687.6">2</text><text x="27.5" y="705.1">2</text><text x="27.5" y="711.1">3</text><path d="M24.5 88.7H37.5M35 94.5H37.5M33 100.4H37.5M35 106.3H37.5M24.5 112.1H37.5M35 118H37.5M33 123.8H37.5M35 129.7H37.5M24.5 135.6H37.5M35 141.4H37.5M33 147.3H37.5M35 153.1H37.5M24.5 159H37.5M35 164.9H37.5M33 170.7H37.5M35 176.6H37.5M24.5 182.4H37.5M35 188.3H37.5M33 194.2H37.5M35 200H37.5M24.5 205.9H37.5M35 211.7H37.5M33 217.6H37.5M35 223.5H37.5M24.5 229.3H37.5M35 235.2H37.5M33 241H37.5M35 246.9H37.5M24.5 252.8H37.5M35 258.6H37.5M33 264.5H37.5M35 270.3H37.5M24.5 276.2H37.5M35 282H37.5M33 287.9H37.5M35 293.8H37.5M24.5 299.6H37.5M35 305.5H37.5M33 311.3H37.5M35 317.2H37.5M24.5 323.1H37.5M35 328.9H37.5M33 334.8H37.5M35 340.6H37.5M24.5 346.5H37.5M35 352.4H37.5M33 358.2H37.5M35 364.1H37.5M24.5 369.9H37.5M35 375.8H37.5M33 381.7H37.5M35 387.5H37.5M24.5 393.4H37.5M35 399.2H37.5M33 405.1H37.5M35 411H37.5M24.5 416.8H37.5M35 422.7H37.5M33 428.5H37.5M35 434.4H37.5M24.5 440.2H37.5M35 446.1H37.5M33 452H37.5M35 457.8H37.5M24.5 463.7H37.5M35 469.5H37.5M33 475.4H37.5M35 481.3H37.5M24.5 487.1H37.5M35 493H37.5M33 498.8H37.5M35 504.7H37.5M24.5 510.6H37.5M35 516.4H37.5M33 522.3H37.5M35 528.1H37.5M24.5 534H37.5M35 539.9H37.5M33 545.7H37.5M35 551.6H37.5M24.5 557.4H37.5M35 563.3H37.5M33 569.2H37.5M35 575H37.5M24.5 580.9H37.5M35 586.7H37.5M33 592.6H37.5M35 598.5H37.5M24.5 604.3H37.5M35 610.2H37.5M33 616H37.5M35 621.9H37.5M24.5 627.8H37.5M35 633.6H37.5M33 639.5H37.5M35 645.3H37.5M24.5 651.2H37.5M35 657H37.5M33 662.9H37.5M35 668.8H37.5M24.5 674.6H37.5M35 680.5H37.5M33 686.3H37.5M35 692.2H37.5M24.5 698.1H37.5M35 703.9H37.5" stroke="#626264" stroke-width=".7" fill="none"/><path d="M187.5 64V79" stroke="#d8d6da" stroke-width=".8"/><path d="M24.5 146.5H37.5" stroke="#d8d6da" stroke-width=".8"/><rect x="889" y="66" width="10" height="640" fill="#403f41"/><rect x="24.5" y="705.5" width="874.5" height="10.5" fill="#424143"/><rect x="24.5" y="705.5" width="39.5" height="10.5" fill="#3b3a3c"/><text x="38" y="713.6" font-size="6" fill="#c9c7cb">25%</text><text x="88.5" y="713.8" font-size="6.7" fill="#c9c7cb">Doc: 82.4M/1.59G</text><path d="M172 708.5l1.8 2.3-1.8 2.3" stroke="#c9c7cb" stroke-width=".8" fill="none"/><path d="M188 142.5V151.5M183.5 147H192.5" stroke="#d6d4d8" stroke-width="1.6" opacity=".75"/><path d="M188 142.5V151.5M183.5 147H192.5" stroke="#6a686c" stroke-width=".5"/></svg>
  <svg style="left:899px;top:36px" width="373" height="666" viewBox="899 50 373 666" font-family="Liberation Sans, sans-serif" font-size="6.8">
    <defs>
      <linearGradient id="cfh" x1="0" y1="0" x2="1" y2="0"><stop offset="0" stop-color="#fff"/><stop offset=".5" stop-color="#ee6a78"/><stop offset="1" stop-color="#e60019"/></linearGradient>
      <linearGradient id="cfv" x1="0" y1="0" x2="0" y2="1"><stop offset="0" stop-color="#000" stop-opacity="0"/><stop offset="1" stop-color="#000"/></linearGradient>
      <linearGradient id="hue" x1="0" y1="0" x2="0" y2="1"><stop offset="0" stop-color="#f00020"/><stop offset=".17" stop-color="#f0f"/><stop offset=".33" stop-color="#1a1aff"/><stop offset=".5" stop-color="#0ff"/><stop offset=".67" stop-color="#0f0"/><stop offset=".83" stop-color="#ff0"/><stop offset="1" stop-color="#f00"/></linearGradient>
      <g id="pmenu"><path d="M0 0h6M0 1.8h6M0 3.6h6" stroke="#a9a7ab" stroke-width=".9"/></g>
      <g id="coll"><path d="M0 .3l1.3 1.4L0 3.1M2.5 .3l1.3 1.4L2.5 3.1" stroke="#77757a" stroke-width=".7" fill="none"/></g>
    </defs>
    <!-- base dock -->
    <rect x="899" y="50" width="373" height="666" fill="#39373b"/>
    <use href="#coll" x="914.5" y="51.5"/><use href="#coll" x="1093.5" y="51.5"/><use href="#coll" x="1263" y="51.5"/>
    <!-- icon strip -->
    <rect x="901" y="57" width="24.3" height="659" fill="#4a484b"/>
    <rect x="901" y="100" width="23.5" height="1" fill="#3c3a3e"/>
    <text x="908" y="75.5" font-size="11" fill="#e2e0e4">A</text><path d="M916.8 65.5V76.5" stroke="#e2e0e4" stroke-width=".9"/>
    <text x="909" y="93" font-size="9.5" font-weight="700" fill="#e2e0e4">¶</text>
    <!-- ===== COLOR PANEL ===== -->
    <rect x="927" y="57" width="175.5" height="144" fill="#464447"/>
    <rect x="927" y="57" width="175.5" height="17.5" fill="#3a3a3b"/>
    <rect x="927" y="57" width="28.5" height="17.5" fill="#464447"/>
    <text x="932.5" y="68.5" font-weight="700" font-size="7" fill="#eeecf0">Color</text>
    <text x="960.5" y="68.5" font-weight="700" font-size="7" fill="#a19fa3">Swatches</text>
    <use href="#pmenu" x="1092" y="64.5"/>
    <rect x="940.5" y="88" width="9.5" height="10.5" fill="#151a30" stroke="#c8c6ca" stroke-width=".7"/>
    <rect x="932.5" y="82" width="11.5" height="10.5" fill="#fff"/>
    <rect x="954.5" y="79.5" width="116" height="109.5" fill="url(#cfh)"/>
    <rect x="954.5" y="79.5" width="116" height="109.5" fill="url(#cfv)"/>
    <circle cx="955.5" cy="80.5" r="1.6" fill="none" stroke="#fff" stroke-width=".9"/>
    <rect x="1080" y="79.5" width="13" height="109.5" fill="url(#hue)"/>
    <path d="M1075.3 186.5l3.6 2.2-3.6 2.2z" fill="#eceaee"/>
  <rect x="927" y="204" width="175.5" height="227" fill="#464447"/>
    <rect x="927" y="204" width="175.5" height="15.5" fill="#3a3a3b"/>
    <rect x="1023" y="204" width="36" height="15.5" fill="#464447"/>
    <text x="932" y="214" font-weight="700" font-size="6.7" fill="#a19fa3">Properties</text>
    <text x="977" y="214" font-weight="700" font-size="6.7" fill="#a19fa3">Adjustments</text>
    <text x="1029" y="214" font-weight="700" font-size="6.7" fill="#eeecf0">History</text>
    <use href="#pmenu" x="1092" y="209.5"/>
    <rect x="927" y="219.5" width="16.5" height="194.5" fill="#474649"/>
    <rect x="927" y="400.7" width="166" height="14" fill="#5a595c"/>
    <rect x="927" y="414.3" width="175.5" height=".8" fill="#3c3a3e"/>
    <defs><g id="hdoc"><rect x="-4" y="-3.2" width="8.6" height="7.8" fill="none" stroke="#e0dee2" stroke-width="1"/><rect x="-4.5" y="-4.8" width="6" height="2" fill="#e8e6ea"/><rect x="-2.2" y="-.8" width="5" height="3.6" fill="#8e8e90"/><path d="M-2.2-1.5h5" stroke="#77777a" stroke-width=".6"/></g></defs>
    <g transform="translate(950 234.6)"><path d="M-2.2-4.5v7h7M-4.5-2.2h7v7" stroke="#d0ced2" stroke-width="1.1" fill="none"/></g>
    <text x="961.7" y="237" fill="#c4c2c6">Crop</text>
    <use href="#hdoc" x="950" y="249"/>
    <text x="961.7" y="251.4" fill="#c4c2c6">Convert to Smart Object</text>
    <use href="#hdoc" x="950" y="263.4"/>
    <text x="961.7" y="265.8" fill="#c4c2c6">Camera Raw Filter</text>
    <use href="#hdoc" x="950" y="277.7"/>
    <text x="961.7" y="280.1" fill="#c4c2c6">Edit Filter Effect ( Camera Raw Filter )</text>
    <use href="#hdoc" x="950" y="292.1"/>
    <text x="961.7" y="294.5" fill="#c4c2c6">Disable Layer Mask</text>
    <use href="#hdoc" x="950" y="306.5"/>
    <text x="961.7" y="308.9" fill="#c4c2c6">Enable Layer Mask</text>
    <use href="#hdoc" x="950" y="320.9"/>
    <text x="961.7" y="323.3" fill="#c4c2c6">Drag Group</text>
    <use href="#hdoc" x="950" y="335.3"/>
    <text x="961.7" y="337.7" fill="#c4c2c6">Layer Order</text>
    <use href="#hdoc" x="950" y="349.6"/>
    <text x="961.7" y="352" fill="#c4c2c6">Free Transform</text>
    <use href="#hdoc" x="950" y="364"/>
    <text x="961.7" y="366.4" fill="#c4c2c6">Nudge</text>
    <use href="#hdoc" x="950" y="378.4"/>
    <text x="961.7" y="380.8" fill="#c4c2c6">Disable Layer Mask</text>
    <use href="#hdoc" x="950" y="392.8"/>
    <text x="961.7" y="395.2" fill="#c4c2c6">Enable Layer Mask</text>
    <use href="#hdoc" x="950" y="407.2"/>
    <text x="961.7" y="409.6" fill="#e4e2e6">Delete Layer</text>
    <path d="M946.5 223.7h7.5" stroke="#d0ced2" stroke-width="1"/><path d="M1010 220.5h3" stroke="#77757a" stroke-width=".8"/>
    <rect x="1095" y="307" width="5.2" height="106" rx="2.6" fill="#6a686c"/>
    <g fill="#d6d4d8"><path d="M1037.5 426.5l4-7 4 7z"/><rect x="1042.5" y="419" width="4.5" height="5" rx=".6" fill="#d6d4d8" stroke="#464447" stroke-width=".6"/><path d="M1044.8 420v3M1043.3 421.5h3" stroke="#464447" stroke-width=".7"/>
    <path d="M1058.7 420.2h2l.8-1.1h2.6l.8 1.1h2v5.8h-8.2z"/><circle cx="1062.8" cy="423" r="1.7" fill="#464447"/>
    <path d="M1077 420h6.4v.9H1077zM1078.8 419h2.8v1h-2.8zM1077.6 421.5h5.2l-.5 5.2h-4.2z"/></g>
    <rect x="927" y="433" width="175.5" height="283" fill="#464447"/>
    <rect x="927" y="433" width="175.5" height="16.5" fill="#3a3a3b"/>
    <rect x="927" y="433" width="29.5" height="16.5" fill="#464447"/>
    <text x="932" y="443.8" font-weight="700" font-size="6.7" fill="#eeecf0">Layers</text>
    <text x="964" y="443.8" font-weight="700" font-size="6.7" fill="#a19fa3">Channels</text>
    <text x="1006" y="443.8" font-weight="700" font-size="6.7" fill="#a19fa3">Paths</text>
    <use href="#pmenu" x="1092" y="439.5"/>
    <rect x="930" y="455.5" width="54.5" height="11.5" rx="1" fill="#3f3d41"/>
    <circle cx="936.3" cy="460.6" r="1.9" fill="none" stroke="#d0ced2" stroke-width=".8"/><path d="M937.7 462l1.7 1.7" stroke="#d0ced2" stroke-width=".9"/>
    <text x="941.5" y="463.6" fill="#dcdade">Kind</text><path d="M976.5 460.5l1.8 1.8 1.8-1.8" stroke="#c5c3c7" stroke-width=".8" fill="none"/>
    <g stroke="#d6d4d8" fill="none" stroke-width=".9"><rect x="991.5" y="457.8" width="7" height="6"/><path d="M992.5 462.5l1.8-2 1.5 1.5 1-1 1.2 1.5" stroke-width=".7"/>
    <circle cx="1009.3" cy="461" r="3"/><path d="M1009.3 458a3 3 0 0 1 0 6z" fill="#d6d4d8"/>
    <path d="M1021.3 458h6M1024.3 458v6.5M1023 464.5h2.6" stroke-width="1.1"/><path d="M1021.3 458v1.3M1027.3 458v1.3" stroke-width=".7"/>
    <rect x="1037" y="458.5" width="5.5" height="5.5"/><path d="M1035.8 458.5h1.2M1042.5 458.5h1.2M1035.8 464h1.2M1042.5 464h1.2M1037 457.3v1.2M1042.5 457.3v1.2M1037 464v1.2M1042.5 464v1.2" stroke-width=".8"/></g>
    <path d="M1051 459.5h3.5l2 1.8v3.5h-5.5z" fill="#d6d4d8"/><rect x="1053" y="461.8" width="2.6" height="2.2" fill="#464447"/><path d="M1053.6 461.8v-1a.7.7 0 0 1 1.4 0v1" stroke="#464447" stroke-width=".5" fill="none"/>
    <circle cx="1068.3" cy="458.5" r="2.1" fill="#e4e2e6"/><path d="M1068.3 460.5v4.5" stroke="#6a686c" stroke-width="1.6"/>
    <rect x="930" y="472.8" width="78" height="11.5" rx="1" fill="#3f3d41"/>
    <text x="933" y="481" fill="#dcdade">Normal</text><path d="M1001.5 477.8l1.8 1.8 1.8-1.8" stroke="#c5c3c7" stroke-width=".8" fill="none"/>
    <text x="1012" y="481" fill="#c4c2c6">Opacity:</text>
    <rect x="1039" y="472.8" width="22.5" height="11.5" rx="1" fill="#3f3d41"/><text x="1041.3" y="481" fill="#dcdade">52%</text>
    <rect x="1062.5" y="472.8" width="8" height="11.5" rx="1" fill="#444246"/><path d="M1064.7 477.8l1.8 1.8 1.8-1.8" stroke="#c5c3c7" stroke-width=".8" fill="none"/>
    <text x="930" y="498.6" fill="#c4c2c6">Lock:</text>
    <g stroke="#d6d4d8" fill="none" stroke-width=".8"><rect x="949.8" y="493" width="6" height="6" stroke-dasharray="1 .7"/><path d="M952.8 493v6M949.8 496h6" stroke-width=".5"/>
    <path d="M964 499.5l5.5-7" stroke-width="1.4"/>
    <path d="M980 492.5v7M976.5 496h7" stroke-width="1.1"/><path d="M980 491.5l1.3 1.5h-2.6zM980 500.5l1.3-1.5h-2.6zM975.5 496l1.5-1.3v2.6zM984.5 496l-1.5-1.3v2.6z" fill="#d6d4d8" stroke="none"/>
    <path d="M990.8 492.5h4l2 2v4.5h-6z" stroke-width=".9"/><path d="M996.8 499v-2h-3" stroke-width=".7"/></g>
    <rect x="1005.3" y="495" width="5.6" height="4.6" rx=".6" fill="#d6d4d8"/><path d="M1006.5 495v-1.3a1.6 1.6 0 0 1 3.2 0V495" stroke="#d6d4d8" stroke-width=".9" fill="none"/>
    <text x="1027" y="498.6" fill="#c4c2c6">Fill:</text>
    <rect x="1039" y="490.3" width="22.5" height="11.5" rx="1" fill="#3f3d41"/><text x="1040.5" y="498.6" fill="#dcdade">100%</text>
    <rect x="1062.5" y="490.3" width="8" height="11.5" rx="1" fill="#444246"/><path d="M1064.7 495.3l1.8 1.8 1.8-1.8" stroke="#c5c3c7" stroke-width=".8" fill="none"/>
    <rect x="927" y="505.5" width="175.5" height=".8" fill="#3c3a3e"/>
    <defs><g id="eye"><path d="M-4 0Q0-3.8 4 0Q0 3.8-4 0z" fill="#e0dee2"/><circle r="1.5" fill="#464447"/><circle r=".7" fill="#e0dee2"/></g>
    <linearGradient id="th1" x1="0" y1="0" x2="0" y2="1"><stop offset="0" stop-color="#0e1634"/><stop offset=".3" stop-color="#4a4070"/><stop offset=".5" stop-color="#5a5684"/><stop offset=".62" stop-color="#2a3a6a"/><stop offset="1" stop-color="#121c3c"/></linearGradient>
    <linearGradient id="th2" x1="0" y1="0" x2="0" y2="1"><stop offset="0" stop-color="#16204a"/><stop offset=".45" stop-color="#4a5c84"/><stop offset=".56" stop-color="#1f8272"/><stop offset="1" stop-color="#156a60"/></linearGradient>
    <linearGradient id="th3" x1="0" y1="0" x2="0" y2="1"><stop offset="0" stop-color="#0c1838"/><stop offset=".4" stop-color="#2c5a98"/><stop offset=".7" stop-color="#1c3e74"/><stop offset="1" stop-color="#0c1a3a"/></linearGradient>
    <pattern id="chk" width="2" height="2" patternUnits="userSpaceOnUse"><rect width="2" height="2" fill="#f2f0f4"/><rect width="1" height="1" fill="#d9d7db"/><rect x="1" y="1" width="1" height="1" fill="#d9d7db"/></pattern></defs>
    <rect x="927" y="532" width="166" height=".8" fill="#403e42"/>
    <rect x="927" y="557.5" width="166" height=".8" fill="#403e42"/>
    <rect x="927" y="583" width="166" height=".8" fill="#403e42"/>
    <rect x="927" y="620" width="166" height=".8" fill="#403e42"/>
    <rect x="927" y="644.5" width="166" height=".8" fill="#403e42"/>
    <rect x="927" y="669.5" width="166" height=".8" fill="#403e42"/>
    <rect x="927" y="687" width="166" height=".8" fill="#403e42"/>
    <rect x="927" y="506" width="16.5" height="202" fill="#464447"/>
    <rect x="948" y="509" width="15.5" height="19.5" fill="url(#th1)"/><circle cx="956.525" cy="514.265" r="2.8" fill="#fbf2f6"/><path d="M954.665 524.6L954.975 517.19L954.355 516.8L955.13 516.41V514.265L956.525 512.9L957.92 514.265V516.41L958.695 516.8L958.075 517.19L958.385 524.6Z" fill="#14162e"/><rect x="957.5" y="522" width="6" height="6.5" fill="#f0eef2"/><rect x="958.9" y="524" width="3.2" height="3.2" fill="#3a383c"/><rect x="958.5" y="522.5" width="2" height="1.5" fill="#3a383c"/>
    <text x="968.3" y="521.5" fill="#c4c2c6">Refrence (OLD)</text>
    <rect x="948" y="534.5" width="15.5" height="19.5" fill="url(#th2)"/><circle cx="956.525" cy="539.765" r="2.8" fill="#fbf2f6"/><path d="M954.665 550.1L954.975 542.69L954.355 542.3L955.13 541.91V539.765L956.525 538.4L957.92 539.765V541.91L958.695 542.3L958.075 542.69L958.385 550.1Z" fill="#c4ccda"/>
    <text x="968.3" y="547" fill="#c4c2c6">Layer 7</text>
    <use href="#eye" x="936.2" y="570"/>
    <rect x="948" y="560" width="15.5" height="19.5" fill="url(#th1)"/><circle cx="956.525" cy="565.265" r="2.8" fill="#fbf2f6"/><path d="M954.665 575.6L954.975 568.19L954.355 567.8L955.13 567.41V565.265L956.525 563.9L957.92 565.265V567.41L958.695 567.8L958.075 568.19L958.385 575.6Z" fill="#14162e"/><rect x="957.5" y="573" width="6" height="6.5" fill="#f0eef2"/><rect x="958.9" y="575" width="3.2" height="3.2" fill="#3a383c"/><rect x="958.5" y="573.5" width="2" height="1.5" fill="#3a383c"/>
    <text x="968.3" y="572.5" fill="#c4c2c6">Layer 6 copy 2</text>
    <rect x="1085.5" y="558" width="7" height="25" fill="#434145"/>
    <circle cx="1079.5" cy="570" r="2.2" fill="none" stroke="#bdbbbf" stroke-width=".7"/><circle cx="1081.5" cy="570" r="2.2" fill="none" stroke="#bdbbbf" stroke-width=".7"/><path d="M1087.8 571l1.5-1.7 1.5 1.7" stroke="#d0ced2" stroke-width=".8" fill="none"/>
    <use href="#eye" x="961" y="593.5"/>
    <rect x="967.8" y="585.5" width="15.5" height="19" fill="#ffffff"/>
    <text x="989.3" y="596" fill="#c4c2c6">Smart Filters</text>
    <g transform="translate(972 611.5) scale(.85)"><use href="#eye"/></g>
    <text x="978.5" y="614" fill="#c4c2c6">Camera Raw Filter</text>
    <path d="M1078.5 610.5h7M1078.5 613.5h7" stroke="#d0ced2" stroke-width=".8"/><path d="M1080.5 609v2.5M1083.5 612.2v2.5" stroke="#d0ced2" stroke-width="1.2"/>
    <use href="#eye" x="936.2" y="631.5"/>
    <rect x="948" y="621.5" width="15.5" height="19.5" fill="url(#th3)"/><circle cx="956.525" cy="626.765" r="2.8" fill="#fbf2f6"/><path d="M954.665 637.1L954.975 629.69L954.355 629.3L955.13 628.91V626.765L956.525 625.4L957.92 626.765V628.91L958.695 629.3L958.075 629.69L958.385 637.1Z" fill="#14162e"/>
    <text x="968.3" y="634" fill="#c4c2c6">Layer 6 copy</text>
    <use href="#eye" x="936.2" y="657"/>
    <rect x="948" y="647.5" width="15.5" height="19.5" fill="url(#chk)"/>
    <text x="968.3" y="659.5" fill="#c4c2c6">Layer 6</text>
    <use href="#eye" x="936.2" y="677.5"/>
    <path d="M948 676.5l1.8 1.8 1.8-1.8" stroke="#c5c3c7" stroke-width=".8" fill="none"/>
    <path d="M955 674.5h3l.8 1h4.7v5.5H955z" fill="#d6d4d8"/><path d="M955 676.3h8.5" stroke="#464447" stroke-width=".5"/>
    <text x="970.8" y="680" fill="#c4c2c6">Top</text>
    <use href="#eye" x="936.2" y="698"/>
    <rect x="957.5" y="689" width="15.5" height="13" fill="url(#chk)"/>
    <text x="978.5" y="700.5" fill="#c4c2c6">Layer 2</text>
    <rect x="1095" y="508" width="5.2" height="32" rx="2.6" fill="#6a686c"/>
    <rect x="927" y="702.5" width="175.5" height="13.5" fill="#464447"/>
    <g stroke="#77757a" stroke-width=".8" fill="none"><rect x="975.8" y="706.5" width="3.6" height="2.6" rx="1.3"/><rect x="978.6" y="706.5" width="3.6" height="2.6" rx="1.3"/></g>
    <text x="993.5" y="711" font-style="italic" font-size="7.5" fill="#d6d4d8">fx</text><path d="M1001.5 711.5h1.5v-1.5z" fill="#a9a7ab"/>
    <rect x="1010" y="704.5" width="8" height="6.5" rx=".6" fill="#d6d4d8"/><circle cx="1014" cy="707.7" r="2" fill="#464447"/>
    <circle cx="1030.5" cy="708" r="3.2" fill="none" stroke="#d6d4d8" stroke-width=".9"/><path d="M1030.5 704.8a3.2 3.2 0 0 0 0 6.4z" fill="#d6d4d8"/><path d="M1034.5 711.5h1.5v-1.5z" fill="#a9a7ab"/>
    <path d="M1043.5 704.8h3l.8 1h4.7v5.4h-8.5z" fill="#d6d4d8"/>
    <path d="M1061 704.8h6.5v6.5h-4.3l-2.2-2.2z" fill="none" stroke="#d6d4d8" stroke-width=".9"/><path d="M1061 709.1h2.2v2.2" fill="none" stroke="#d6d4d8" stroke-width=".7"/>
    <path d="M1077.6 705.3h6.4v.9h-6.4zM1079.4 704.3h2.8v1h-2.8zM1078.2 706.8h5.2l-.5 5h-4.2z" fill="#d6d4d8"/>
    <rect x="1105" y="57" width="167" height="659" fill="#464447"/>
    <rect x="1105" y="57" width="167" height="17.5" fill="#3a3a3b"/>
    <rect x="1105" y="57" width="38.5" height="17.5" fill="#464447"/>
    <text x="1110" y="68.5" font-weight="700" font-size="7" fill="#eeecf0" letter-spacing="-.15">Libraries</text>
    <use href="#pmenu" x="1262" y="64.5"/>
    <circle cx="1112" cy="85" r="1.9" fill="none" stroke="#d6d4d8" stroke-width=".9"/><path d="M1113.4 86.4l1.8 1.8" stroke="#d6d4d8" stroke-width="1"/>
    <text x="1118" y="88" font-size="7" fill="#5f5d62">Search Current Library</text>
    <path d="M1259 84.5l1.8 1.8 1.8-1.8" stroke="#77757a" stroke-width=".8" fill="none"/>
    <rect x="1109" y="93" width="157" height=".7" fill="#434145"/>
    <rect x="1111" y="98" width="154" height="11" rx="1" fill="#3b393d"/>
    <text x="1116" y="106" font-size="7.2" fill="#e4e2e6">Downloads</text>
    <path d="M1258.5 102.8l1.8 1.8 1.8-1.8" stroke="#c5c3c7" stroke-width=".8" fill="none"/>
    <text x="1109.5" y="122" font-size="7.2" fill="#dcdade">View by Type</text>
    <path d="M1154.5 119l1.5 1.5 1.5-1.5" stroke="#77757a" stroke-width=".8" fill="none"/>
    <rect x="1241.3" y="114.5" width="10" height="10" rx="1" fill="#343236"/>
    <g fill="#e4e2e6"><rect x="1243" y="116.2" width="3" height="3"/><rect x="1246.7" y="116.2" width="3" height="3"/><rect x="1243" y="119.9" width="3" height="3"/><rect x="1246.7" y="119.9" width="3" height="3"/>
    <rect x="1256" y="116" width="1.6" height="1.6"/><rect x="1256" y="118.8" width="1.6" height="1.6"/><rect x="1256" y="121.6" width="1.6" height="1.6"/><rect x="1258.5" y="116.3" width="5" height="1"/><rect x="1258.5" y="119.1" width="5" height="1"/><rect x="1258.5" y="121.9" width="5" height="1"/></g>
    <rect x="1105" y="128" width="167" height=".7" fill="#434145"/>
    <path d="M1110 136.5h4l-2 3z" fill="#d6d4d8"/><text x="1116.5" y="140.8" font-size="7" fill="#bdbbbf">Colors</text>
    <rect x="1109.5" y="145.5" width="39.5" height="34" rx="2" fill="#1a6cc0" stroke="#1f5aa0" stroke-width=".8"/>
    <path d="M1110 188.5h4l-2 3z" fill="#d6d4d8"/><text x="1116.5" y="192.8" font-size="7" fill="#77757a">Graphics</text>
    <rect x="1110" y="199" width="62" height="48.5" rx="1.5" fill="#c9c7cb"/>
    <defs><linearGradient id="lg1" x1="0" y1="0" x2="0" y2="1"><stop offset="0" stop-color="#f0eef0"/><stop offset=".2" stop-color="#e2d6de"/><stop offset=".3" stop-color="#b08098"/><stop offset=".42" stop-color="#5e3450"/><stop offset=".52" stop-color="#1a2834"/><stop offset="1" stop-color="#0a161e"/></linearGradient></defs>
    <rect x="1121" y="199" width="40" height="47.5" fill="url(#lg1)"/>
    <path d="M1121 215l8-3 7 2 6-4 8 3 11 4v5h-40z" fill="#7a4664" opacity=".7"/><rect x="1134" y="236" width="13" height="1.6" fill="#e0dee2" opacity=".85"/>
    <circle cx="1119" cy="208" r="5.3" fill="#4a8ad8" stroke="#e4eefb" stroke-width=".6"/><path d="M1116.5 208l1.8 2 3.3-3.8" stroke="#fff" stroke-width="1.2" fill="none"/>
    <path d="M1115 704.5v6.5M1111.8 707.7h6.5" stroke="#e0dee2" stroke-width="1.2"/><path d="M1119 711.5h1.3v-1.3z" fill="#a9a7ab"/>
    <path d="M1126.5 704.8h3l.8 1h4.7v5.4h-8.5z" fill="#d6d4d8"/>
    <path d="M1146 710V704.5M1143.5 706.8l2.5-2.5 2.5 2.5" stroke="#e0dee2" stroke-width="1.1" fill="none"/><rect x="1142" y="710" width="8" height="1.6" fill="#e0dee2"/>
    <text x="1222" y="710.5" font-size="6.3" fill="#c4c2c6">40 KB</text>
    <ellipse cx="1247" cy="708" rx="4.3" ry="3.3" fill="none" stroke="#d6d4d8" stroke-width=".9"/><ellipse cx="1248" cy="708" rx="2" ry="1.7" fill="none" stroke="#d6d4d8" stroke-width=".8"/>
    <path d="M1257.8 705.3h6.4v.9h-6.4zM1259.6 704.3h2.8v1h-2.8zM1258.4 706.8h5.2l-.5 5h-4.2z" fill="#7a787c"/>
  </svg>

</div>
</body>
</html>
